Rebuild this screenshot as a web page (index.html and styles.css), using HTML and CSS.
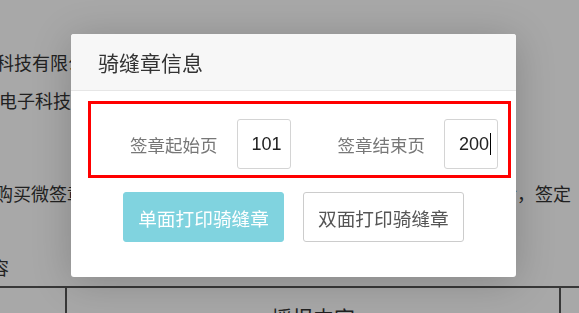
FILE: index.html
```html
<!DOCTYPE html>
<html lang="zh-CN">
<head>
  <meta charset="UTF-8" />
  <meta name="viewport" content="width=device-width, initial-scale=1.0"/>
  <title>骑缝章信息</title>
  <link rel="stylesheet" href="styles.css">
</head>
<body>

  <div class="page">
    <p class="line line-1">科技有限公司</p>
    <p class="line line-2">电子科技有限公司</p>
    <p class="line line-3">购买微签章服务的用户应当仔细阅读本协议全部条款并确认无误后，签定</p>
    <p class="line line-4">容</p>

    <div class="table">
      <div class="cell cell-first"></div>
      <div class="cell cell-main">摇报内容</div>
      <div class="cell cell-last"></div>
    </div>
  </div>

  <div class="backdrop"></div>

  <div class="modal">
    <div class="modal-header">骑缝章信息</div>

    <div class="modal-body">
      <div class="page-range">
        <div class="field">
          <label>签章起始页</label>
          <div class="input">101</div>
        </div>
        <div class="field">
          <label>签章结束页</label>
          <div class="input">200<span class="caret"></span></div>
        </div>
      </div>

      <div class="actions">
        <button class="btn btn-primary">单面打印骑缝章</button>
        <button class="btn btn-default">双面打印骑缝章</button>
      </div>
    </div>
  </div>

</body>
</html>
```

FILE: styles.css
```css
body {
  font-family: "Noto Sans CJK SC", "Noto Sans", sans-serif;
  margin: 0;
  padding: 0;
  width: 579px;
  height: 313px;
  overflow: hidden;
  background-color: #fff;
  color: #333;
}

/* page behind the dialog */
.page {
  font-size: 18px;
  height: 313px;
  overflow: hidden;
}

.line {
  margin: 0;
  line-height: 38px;
  white-space: nowrap;
}

.line-1 {
  margin-top: 43px;
  margin-left: -4px;
}

.line-2 {
  margin-left: -1px;
}

.line-3 {
  margin-top: 55px;
  margin-left: -5px;
}

.line-4 {
  margin-top: 36px;
  margin-left: -9px;
}

.table {
  display: flex;
  border-top: 2px solid #555;
  height: 25px;
}

.cell {
  font-size: 21px;
  line-height: 30px;
  padding-top: 14px;
  text-align: center;
}

.cell-first {
  width: 65px;
  border-right: 2px solid #555;
}

.cell-main {
  width: 492px;
  border-right: 2px solid #555;
}

.cell-last {
  flex: 1;
}

.backdrop {
  position: fixed;
  inset: 0;
  background-color: rgba(0, 0, 0, 0.34);
}

/* dialog */
.modal {
  position: absolute;
  left: 71px;
  top: 34px;
  width: 445px;
  background-color: #fff;
  border-radius: 3px;
  box-shadow: 0 5px 40px rgba(0, 0, 0, 0.2);
  overflow: hidden;
}

.modal-header {
  height: 56px;
  line-height: 56px;
  padding-left: 27px;
  font-size: 21px;
  color: #333;
  background-color: #f7f7f7;
  border-bottom: 1px solid #e6e6e6;
}

.modal-body {
  padding: 10px 5px 35px 17px;
}

.page-range {
  display: flex;
  align-items: center;
  gap: 47px;
  padding: 15px 0 6px 39px;
  border: 3px solid #f00;
}

.field {
  display: flex;
  align-items: center;
  gap: 19px;
  flex-shrink: 0;
}

.field label {
  font-size: 17.5px;
  color: #777;
  white-space: nowrap;
}

.input {
  width: 38px;
  height: 48px;
  line-height: 48px;
  padding-left: 14px;
  border: 1px solid #d4d4d4;
  border-radius: 3px;
  font-family: "Liberation Sans", sans-serif;
  font-size: 18px;
  color: #222;
  white-space: nowrap;
}

.caret {
  display: inline-block;
  width: 1px;
  height: 22px;
  margin-left: 1px;
  vertical-align: -5px;
  background-color: #000;
}

.actions {
  display: flex;
  justify-content: center;
  gap: 19px;
  margin-top: 14px;
  padding-right: 12px;
}

.btn {
  height: 50px;
  padding: 0 14px;
  font-family: "Noto Sans CJK SC", sans-serif;
  font-size: 18.7px;
  border-radius: 3px;
  cursor: pointer;
}

.btn-primary {
  background-color: #80d3df;
  border: 1px solid #80d3df;
  color: #fff;
}

.btn-default {
  background-color: #fff;
  border: 1px solid #ccc;
  color: #555;
}
```
